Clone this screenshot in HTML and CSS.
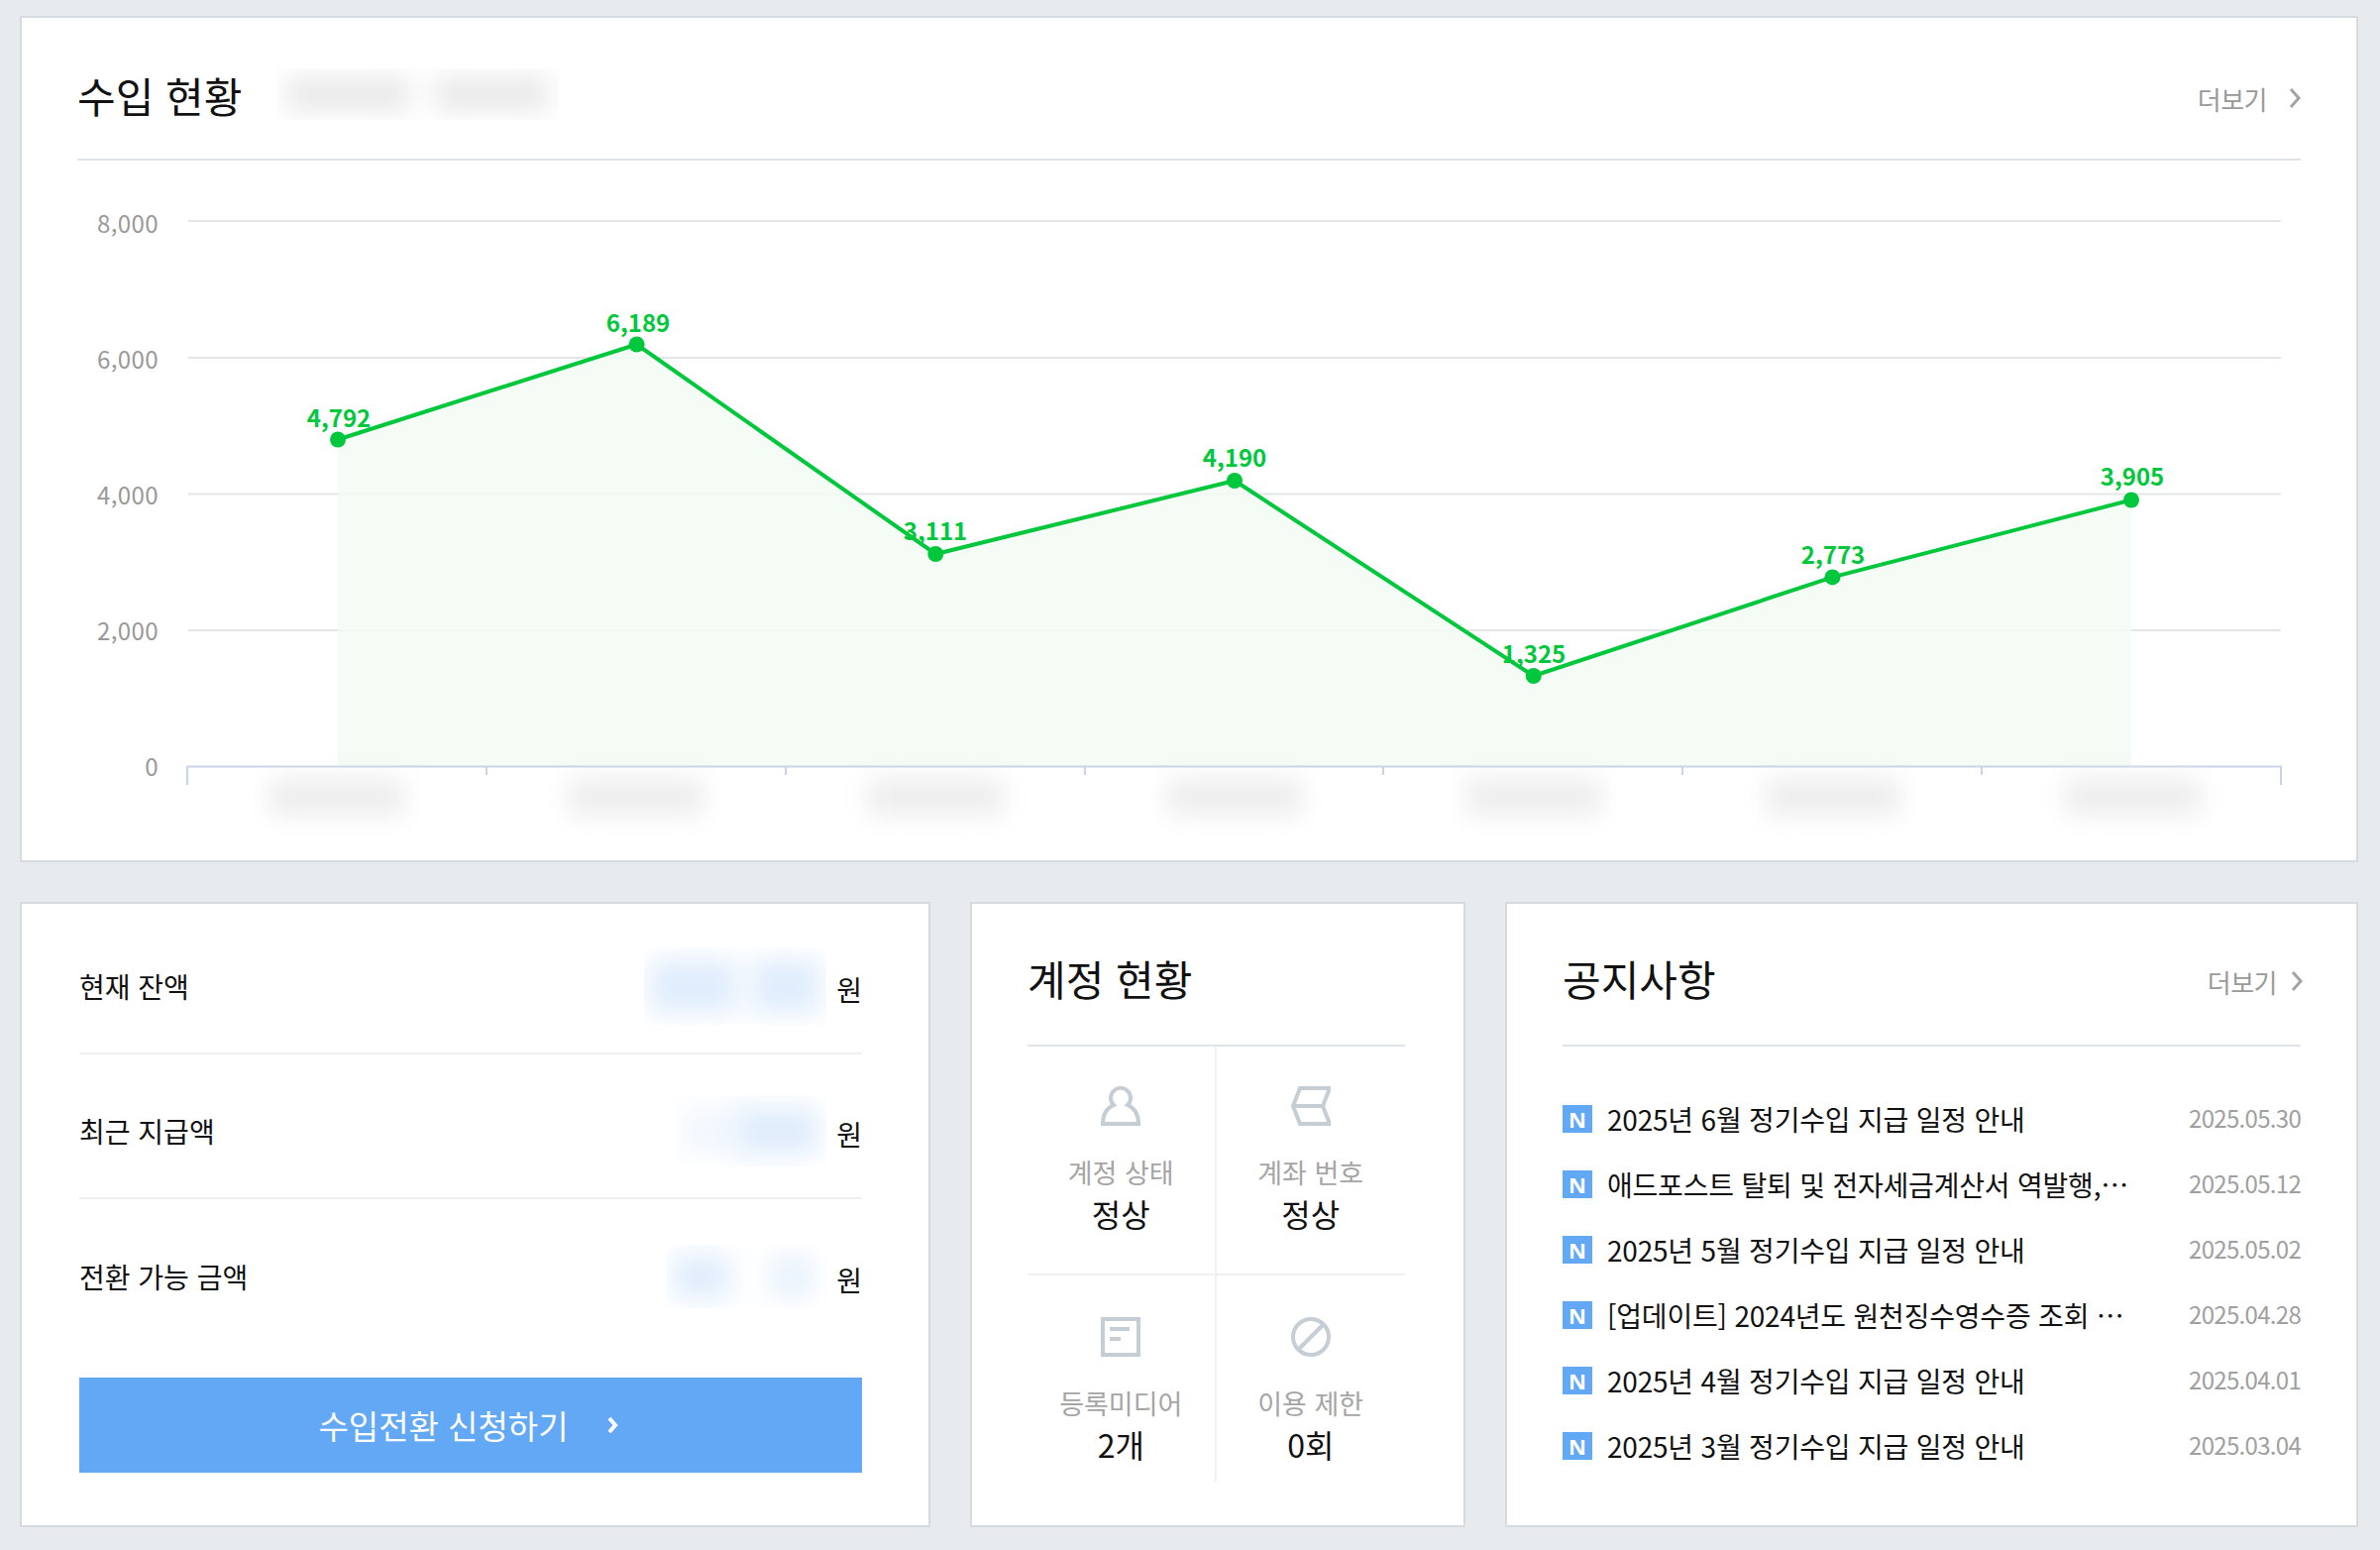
FILE: index.html
```html
<!DOCTYPE html>
<html lang="ko">

<head>
    <meta charset="UTF-8">
    <title>수입 현황</title>
    <link rel="stylesheet" href="styles.css">
</head>

<body>
    <main class="page">
        <section class="card income">
            <div class="card-head">
                <h2>수입 현황</h2>
                <div class="blur-box title-blur"><span class="blob b1"></span><span class="blob b2"></span></div>
                <a class="more">더보기<svg class="more-arrow" viewBox="0 0 12 24"><path d="M2 3l8 9-8 9" /></svg></a>
            </div>
            <div class="chart">
                <svg class="chart-svg" viewBox="78 162 2244 706">
                    <g class="grid">
                        <line x1="190" x2="2302" y1="223" y2="223" />
                        <line x1="190" x2="2302" y1="361" y2="361" />
                        <line x1="190" x2="2302" y1="498.5" y2="498.5" />
                        <line x1="190" x2="2302" y1="636" y2="636" />
                    </g>
                    <polygon class="area" points="341,443.5 642.6,347.5 944.3,559 1246,485 1547.7,682 1849.4,582.4 2151,504.5 2151,773 341,773" />
                    <g class="axis">
                        <line x1="188" x2="2303" y1="773.5" y2="773.5" />
                        <line x1="189" x2="189" y1="773" y2="792" />
                        <line x1="491" x2="491" y1="773" y2="782" />
                        <line x1="793" x2="793" y1="773" y2="782" />
                        <line x1="1095" x2="1095" y1="773" y2="782" />
                        <line x1="1396" x2="1396" y1="773" y2="782" />
                        <line x1="1698" x2="1698" y1="773" y2="782" />
                        <line x1="2000" x2="2000" y1="773" y2="782" />
                        <line x1="2302" x2="2302" y1="773" y2="792" />
                    </g>
                    <g class="y-labels">
                        <text x="160" y="235">8,000</text>
                        <text x="160" y="372">6,000</text>
                        <text x="160" y="509">4,000</text>
                        <text x="160" y="646">2,000</text>
                        <text x="160" y="783">0</text>
                    </g>
                    <g class="x-blur">
                        <rect x="272" y="786" width="136" height="36" />
                        <rect x="574" y="786" width="136" height="36" />
                        <rect x="876" y="786" width="136" height="36" />
                        <rect x="1178" y="786" width="136" height="36" />
                        <rect x="1480" y="786" width="136" height="36" />
                        <rect x="1782" y="786" width="136" height="36" />
                        <rect x="2084" y="786" width="136" height="36" />
                    </g>
                    <polyline class="line" points="341,443.5 642.6,347.5 944.3,559 1246,485 1547.7,682 1849.4,582.4 2151,504.5" />
                    <g class="dots">
                        <circle cx="341" cy="443.5" r="8" />
                        <circle cx="642.6" cy="347.5" r="8" />
                        <circle cx="944.3" cy="559" r="8" />
                        <circle cx="1246" cy="485" r="8" />
                        <circle cx="1547.7" cy="682" r="8" />
                        <circle cx="1849.4" cy="582.4" r="8" />
                        <circle cx="2151" cy="504.5" r="8" />
                    </g>
                    <g class="values">
                        <text x="342" y="431">4,792</text>
                        <text x="644" y="335">6,189</text>
                        <text x="944" y="545">3,111</text>
                        <text x="1246" y="471">4,190</text>
                        <text x="1548" y="669">1,325</text>
                        <text x="1850" y="569">2,773</text>
                        <text x="2152" y="490">3,905</text>
                    </g>
                </svg>
            </div>
        </section>

        <div class="bottom">
            <section class="card balance">
                <div class="balance-row">
                    <span class="balance-label">현재 잔액</span>
                    <div class="blur-box amount-a"><span class="blob a1"></span><span class="blob a2"></span></div>
                    <span class="won">원</span>
                </div>
                <div class="balance-row">
                    <span class="balance-label">최근 지급액</span>
                    <div class="blur-box amount-b"><span class="blob a3"></span><span class="blob a4"></span></div>
                    <span class="won">원</span>
                </div>
                <div class="balance-row">
                    <span class="balance-label">전환 가능 금액</span>
                    <div class="blur-box amount-c"><span class="blob a5"></span><span class="blob a6"></span></div>
                    <span class="won">원</span>
                </div>
                <a class="apply-btn">수입전환 신청하기<svg class="apply-arrow" viewBox="0 0 12 20"><path d="M3 3l6 7-6 7" /></svg></a>
            </section>

            <section class="card account">
                <div class="card-head">
                    <h2>계정 현황</h2>
                </div>
                <div class="account-grid">
                    <div class="cell">
                        <svg class="cell-icon" viewBox="0 0 40 40"><path d="M13 19a10 10 0 1 1 14 0c7 3 11 9 11 19H2c0-10 4-16 11-19z" /></svg>
                        <span class="cell-label">계정 상태</span>
                        <span class="cell-value">정상</span>
                    </div>
                    <div class="cell">
                        <svg class="cell-icon" viewBox="0 0 40 40"><path d="M2 20L9 2h30l-7 18 7 18H9zM2 20h30" /></svg>
                        <span class="cell-label">계좌 번호</span>
                        <span class="cell-value">정상</span>
                    </div>
                    <div class="cell">
                        <svg class="cell-icon" viewBox="0 0 40 40"><path d="M2 2h36v36H2zM9 12h20M9 22h11" /></svg>
                        <span class="cell-label">등록미디어</span>
                        <span class="cell-value">2개</span>
                    </div>
                    <div class="cell">
                        <svg class="cell-icon" viewBox="0 0 40 40"><circle cx="20" cy="20" r="18" /><path d="M8 32L32 8" /></svg>
                        <span class="cell-label">이용 제한</span>
                        <span class="cell-value">0회</span>
                    </div>
                </div>
            </section>

            <section class="card notice">
                <div class="card-head">
                    <h2>공지사항</h2>
                    <a class="more">더보기<svg class="more-arrow" viewBox="0 0 12 24"><path d="M2 3l8 9-8 9" /></svg></a>
                </div>
                <ul class="notice-list">
                    <li><span class="badge">N</span><span class="notice-title">2025년 6월 정기수입 지급 일정 안내</span><span class="notice-date">2025.05.30</span></li>
                    <li><span class="badge">N</span><span class="notice-title">애드포스트 탈퇴 및 전자세금계산서 역발행,…</span><span class="notice-date">2025.05.12</span></li>
                    <li><span class="badge">N</span><span class="notice-title">2025년 5월 정기수입 지급 일정 안내</span><span class="notice-date">2025.05.02</span></li>
                    <li><span class="badge">N</span><span class="notice-title">[업데이트] 2024년도 원천징수영수증 조회 …</span><span class="notice-date">2025.04.28</span></li>
                    <li><span class="badge">N</span><span class="notice-title">2025년 4월 정기수입 지급 일정 안내</span><span class="notice-date">2025.04.01</span></li>
                    <li><span class="badge">N</span><span class="notice-title">2025년 3월 정기수입 지급 일정 안내</span><span class="notice-date">2025.03.04</span></li>
                </ul>
            </section>
        </div>
    </main>
</body>

</html>
```

FILE: styles.css
```css
* {
    box-sizing: border-box;
}

body {
    margin: 0;
    background-color: #e7ebee;
    font-family: "Noto Sans CJK KR", "Noto Sans", sans-serif;
    color: #111;
}

.page {
    padding: 16px 22px 0 20px;
    overflow: hidden;
}

.card {
    background: #fff;
    border: 2px solid #d5dbdf;
}

.card-head {
    display: flex;
    align-items: center;
    height: 144px;
    padding-top: 12px;
    margin: 0 56px;
    border-bottom: 2px solid #dfe4e8;
}

.bottom .card-head {
    padding-top: 6px;
}

h2 {
    margin: 0;
    font-size: 42px;
    font-weight: 400;
}

.more {
    display: flex;
    align-items: center;
    margin-left: auto;
    padding-top: 8px;
    font-size: 26px;
    letter-spacing: -0.5px;
    color: #999;
}

.more-arrow {
    width: 12px;
    height: 24px;
    margin-left: 22px;
    fill: none;
    stroke: #a3a3a3;
    stroke-width: 3;
}

.notice .more-arrow {
    margin-left: 14px;
    margin-right: -2px;
}

/* blurred out values */
.blur-box {
    display: flex;
    overflow: hidden;
}

.blob {
    display: block;
    filter: blur(13px);
    background: #e9e9e9;
}

.title-blur {
    width: 285px;
    height: 52px;
    margin-left: 35px;
    padding: 9px 10px;
    gap: 25px;
}

.b1 {
    width: 125px;
}

.b2 {
    width: 115px;
}

/* chart */
.chart {
    padding: 0 56px;
}

.chart-svg {
    display: block;
    width: 2244px;
    height: 706px;
}

.grid line {
    stroke: #e3e5e6;
    stroke-width: 2;
}

.area {
    fill: #f3faf3;
    fill-opacity: 0.85;
}

.axis line {
    stroke: #c9d4e8;
    stroke-width: 2;
}

.y-labels text {
    font-size: 24px;
    letter-spacing: 0.4px;
    fill: #999;
    text-anchor: end;
}

.x-blur rect {
    fill: #ededed;
    filter: blur(12px);
}

.line {
    fill: none;
    stroke: #00c73c;
    stroke-width: 4;
}

.dots circle {
    fill: #00c73c;
}

.values text {
    font-size: 24px;
    font-weight: 700;
    fill: #00c73c;
    text-anchor: middle;
}

.bottom {
    display: grid;
    grid-template-columns: 919px 500px 861px;
    gap: 40px;
    margin-top: 40px;
}

.bottom .card {
    height: 631px;
}

/* balance */
.balance {
    padding: 6px 67px 0 58px;
}

.balance-row {
    display: flex;
    align-items: center;
    height: 146px;
    padding-top: 10px;
    border-bottom: 2px solid #eef0f2;
}

.balance-row:nth-child(3) {
    border-bottom: none;
}

.balance-label {
    margin-right: auto;
    font-size: 28px;
}

.won {
    padding-top: 6px;
    margin-left: 10px;
    font-size: 28px;
}

.blob.a1, .blob.a2, .blob.a3, .blob.a4, .blob.a5, .blob.a6 {
    background: #e0edfc;
}

.amount-a {
    width: 184px;
    height: 78px;
    padding: 12px 6px;
    gap: 14px;
}

.a1 {
    width: 88px;
}

.a2 {
    width: 70px;
}

.amount-b {
    width: 153px;
    height: 72px;
    padding: 12px 8px;
    gap: 0;
}

.a3 {
    width: 52px;
    opacity: 0.4;
}

.a4 {
    width: 85px;
}

.amount-c {
    width: 161px;
    height: 64px;
    padding: 10px 6px;
    gap: 40px;
}

.a5 {
    width: 58px;
}

.a6 {
    width: 44px;
    opacity: 0.7;
}

.apply-btn {
    display: flex;
    align-items: center;
    justify-content: center;
    height: 96px;
    margin-top: 34px;
    padding-right: 5px;
    background-color: #62a8f5;
    color: #fff;
    font-size: 33px;
}

.apply-arrow {
    width: 12px;
    height: 20px;
    margin-left: 38px;
    fill: none;
    stroke: #fff;
    stroke-width: 4;
}

/* account */
.account .card-head {
    margin: 0 59px 0 56px;
}

.account-grid {
    display: grid;
    grid-template-columns: 1fr 1fr;
    grid-template-rows: 231px 208px;
    margin: 0 59px 0 56px;
}

.cell {
    display: flex;
    flex-direction: column;
    align-items: center;
    padding-top: 40px;
    border-bottom: 2px solid #eef0f2;
}

.cell:nth-child(odd) {
    border-right: 2px solid #eef0f2;
}

.cell:nth-child(n+3) {
    padding-top: 42px;
    border-bottom: none;
}

.cell-icon {
    width: 40px;
    height: 40px;
    fill: none;
    stroke: #c5ced5;
    stroke-width: 4;
}

.cell-label {
    margin-top: 28px;
    font-size: 27px;
    line-height: 38px;
    color: #a5a5a5;
}

.cell-value {
    margin-top: 0;
    font-size: 32px;
    line-height: 44px;
}

/* notice */
.notice-list {
    margin: 0 56px;
    padding: 40px 0 0;
    list-style: none;
}

.notice-list li {
    display: flex;
    align-items: center;
    height: 66px;
}

.badge {
    display: flex;
    align-items: center;
    justify-content: center;
    width: 30px;
    height: 28px;
    margin-right: 15px;
    background-color: #62a8f5;
    color: #fff;
    font-family: "Noto Sans", sans-serif;
    font-size: 22px;
    font-weight: 700;
}

.notice-title {
    white-space: nowrap;
    font-size: 28px;
    letter-spacing: -0.2px;
}

.notice-date {
    margin-left: auto;
    padding-bottom: 3px;
    font-size: 24px;
    letter-spacing: -0.7px;
    color: #a0a0a0;
}
```
